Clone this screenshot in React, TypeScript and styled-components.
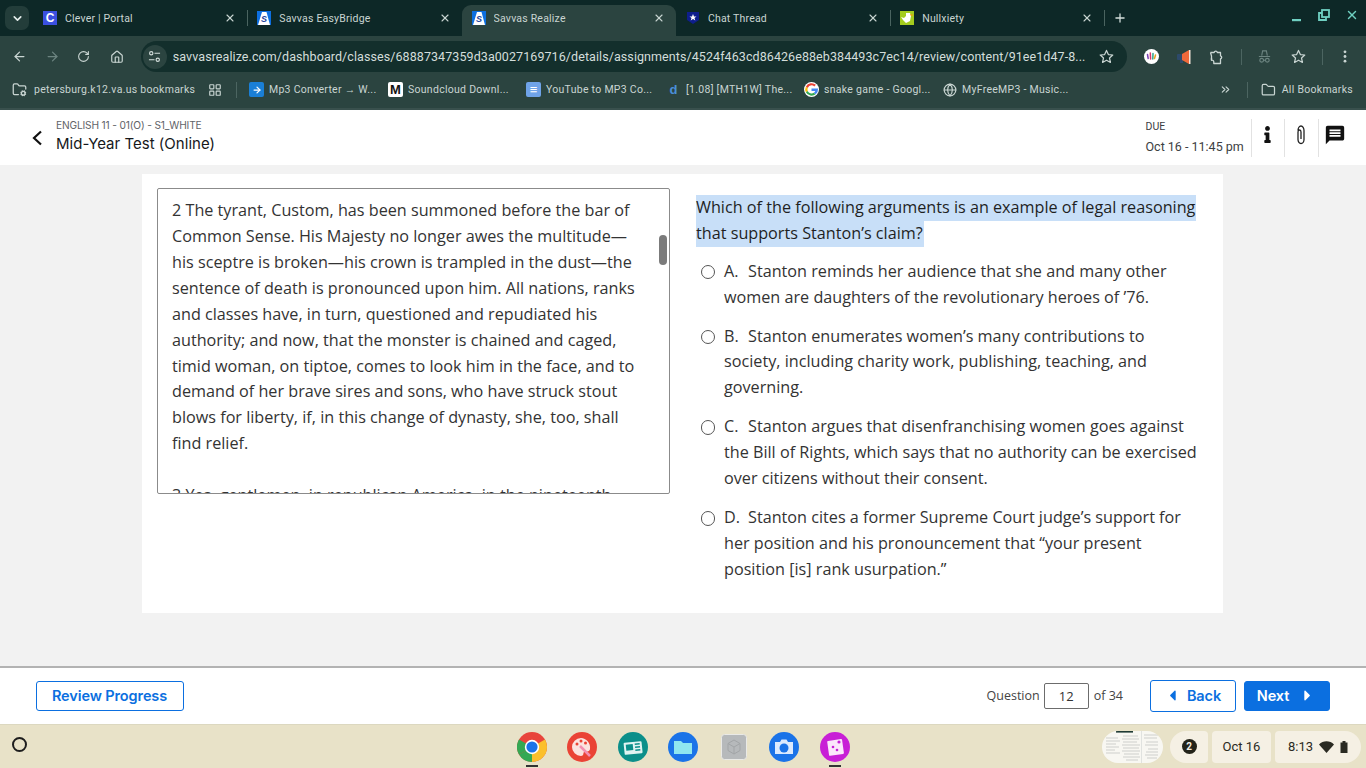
import React from "react";
import styled, { createGlobalStyle } from "styled-components";
import {
  ArrowLeft, ArrowRight, RotateCw, Home, X, Plus,
  ChevronDown, ChevronsRight, Folder, FolderCog, LayoutGrid, Globe,
} from "lucide-react";
import { FaInfo, FaCaretLeft, FaCaretRight } from "react-icons/fa";
import { MdMessage } from "react-icons/md";

const Global = createGlobalStyle`
  html, body { margin: 0; padding: 0; height: 100%; overflow: hidden; background: #f2f2f2; }
  * { box-sizing: border-box; }
`;

const Page = styled.div`
  width: 1366px; height: 768px; display: flex; flex-direction: column; overflow: hidden;
  font-family: "Open Sans", sans-serif;
`;

/* ---- browser chrome ---- */
const TabStrip = styled.div`
  height: 36px; background: #0d2827; display: flex; align-items: stretch; padding-left: 5px;
  color: #c9d5d2; font: 10.5px Roboto, sans-serif; letter-spacing: .2px; position: relative;
`;
const TabMenu = styled.div`
  width: 24px; height: 24px; margin-top: 6px; margin-right: 4px; border-radius: 7px; background: #233d3a;
  display: flex; align-items: center; justify-content: center; color: #e6eeec;
`;
const Tab = styled.div<{ $active?: boolean; $sep?: boolean }>`
  width: 214.3px; display: flex; align-items: center; padding: 0 11px 0 10px; gap: 8px; position: relative;
  background: ${(p) => (p.$active ? "#2b4440" : "transparent")};
  border-radius: ${(p) => (p.$active ? "9px 9px 0 0" : "0")};
  margin-top: ${(p) => (p.$active ? "5px" : "0")};
  padding-bottom: ${(p) => (p.$active ? "5px" : "0")};
  &::after {
    content: ""; display: ${(p) => (p.$sep ? "block" : "none")}; position: absolute; right: -1px; top: 10px;
    width: 1px; height: 16px; background: #4a6460;
  }
`;
const TabTitle = styled.span`flex: 1; white-space: nowrap; overflow: hidden;`;
const Favicon = styled.span<{ $bg: string; $fg?: string }>`
  width: 14px; height: 14px; flex: none; background: ${(p) => p.$bg}; color: ${(p) => p.$fg || "#fff"};
  font: bold 12px/14px "Liberation Sans", sans-serif; letter-spacing: 0; text-align: center; display: inline-block; overflow: hidden;
`;
const NewTab = styled.div`
  margin-left: 1px; width: 30px; display: flex; align-items: center; justify-content: center; color: #d3dedb;
`;
const WindowControls = styled.div`
  margin-left: auto; display: flex; align-items: center; gap: 15px; padding-right: 7px; color: #6fd0c2; padding-bottom: 6px;
`;
const Toolbar = styled.div`
  height: 37px; background: #2b4440; display: flex; align-items: center; padding: 4px 0 0 12px; color: #c9d5d2;
`;
const ToolIcon = styled.span<{ $w?: number; $dim?: boolean }>`
  width: ${(p) => p.$w || 32.7}px; flex: none; display: flex; align-items: center; justify-content: flex-start;
  color: ${(p) => (p.$dim ? "#6c8480" : "#c9d5d2")};
`;
const UrlPill = styled.div`
  width: 986px; height: 31px; margin-left: -2px; border-radius: 16px; background: #132f2c; display: flex; align-items: center;
  padding: 0 13px 0 2px; color: #d3dedb; font: 12.5px Roboto, sans-serif; letter-spacing: .08px; gap: 6px; flex: none;
`;
const SiteChip = styled.span`
  width: 24px; height: 24px; border-radius: 50%; background: #2b4440; display: flex; align-items: center; justify-content: center; flex: none;
`;
const UrlText = styled.span`flex: 1; white-space: nowrap; overflow: hidden;`;
const ToolSep = styled.span`width: 1px; height: 16px; background: #4c6561; flex: none; margin: 0 15px 0 16px;`;
const ExtRight = styled.div`display: flex; align-items: center; margin-left: 17px; gap: 18px;`;
const Bookmarks = styled.div`
  height: 35px; background: #2b4440; display: flex; align-items: center; padding: 0 0 2px 12px; color: #c9d5d2;
  font: 10.5px Roboto, sans-serif; letter-spacing: .28px;
`;
const BookmarkItem = styled.span<{ $w: number; $gap?: number }>`
  display: flex; align-items: center; gap: ${(p) => p.$gap || 5}px; width: ${(p) => p.$w}px; flex: none; white-space: nowrap;
`;
const BmIcon = styled.span<{ $bg?: string; $fg?: string }>`
  width: 15px; height: 15px; flex: none; display: flex; align-items: center; justify-content: center;
  background: ${(p) => p.$bg || "transparent"}; color: ${(p) => p.$fg || "#fff"};
  font: bold 13px/15px "Liberation Sans", sans-serif; letter-spacing: 0; border-radius: 2px;
`;
const BmSep = styled.span<{ $l: number; $r: number }>`
  width: 1px; height: 16px; background: #4c6561; flex: none; margin: 0 ${(p) => p.$r}px 0 ${(p) => p.$l}px;
`;
const ChromeEdge = styled.div`height: 2px; background: #39504d; flex: none;`;

/* ---- app header ---- */
const Header = styled.header`
  height: 55px; flex: none; background: #fff; display: flex; align-items: center; padding: 0 15px 0 31px;
`;
const BackChevron = styled.span`width: 25px; flex: none; color: #111; display: flex; align-items: center;`;
const Titles = styled.div`flex: 1; display: flex; flex-direction: column; gap: 2px; padding-bottom: 4px;`;
const Crumb = styled.div`font: 10.2px/14px Inter, sans-serif; color: #5f6368; letter-spacing: -.16px;`;
const Title = styled.div`font: 400 15px/20px Inter, sans-serif; color: #16181b; letter-spacing: .02px;`;
const Due = styled.div`width: 105px; flex: none; display: flex; flex-direction: column; gap: 7px; color: #3c4043; font-family: Roboto, sans-serif;`;
const DueLabel = styled.div`font-size: 10.5px; line-height: 12px;`;
const DueDate = styled.div`font-size: 12.5px; line-height: 14px; white-space: nowrap;`;
const HeadAction = styled.div`
  width: 33.5px; height: 38px; flex: none; border-left: 1px solid #e2e2e2; display: flex; align-items: center; justify-content: center; color: #111; padding-bottom: 6px;
`;

/* ---- content ---- */
const Main = styled.main`flex: 1; background: #f2f2f2; padding: 9px 143px 0 142px;`;
const Card = styled.section`
  height: 439px; background: #fff; padding: 14px 0 0 15px; display: flex; gap: 26px;
`;
const Passage = styled.div`
  width: 513px; height: 306px; border: 1px solid #8b8b8b; border-radius: 2px; overflow: hidden; position: relative;
  flex: none; padding: 9px 0 0 14px; color: #333; font-size: 16.2px; line-height: 25.92px;
`;
const Para = styled.p`margin: 0 0 26px; width: 475px;`;
const Thumb = styled.span`
  position: absolute; left: 501px; top: 46px; width: 8px; height: 30px; border-radius: 4px; background: #7b7b7b;
`;
const QuestionCol = styled.div`width: 504px; flex: none; padding-top: 6px;`;
const Prompt = styled.p`margin: 0 0 12.7px; font-size: 16.2px; line-height: 26px; color: #1f1f1f;`;
const Selected = styled.span`
  background: #c8dff8; padding: 1.4px 1px 2.5px 0; -webkit-box-decoration-break: clone; box-decoration-break: clone;
`;
const Option = styled.label`
  display: flex; gap: 9px; margin: 0 0 13px; padding-left: 4.5px; font-size: 16.2px; line-height: 25.92px; color: #333; width: 502px;
`;
const Radio = styled.span`
  width: 14.5px; height: 14.5px; margin-top: 6px; border-radius: 50%; border: 1.5px solid #555; flex: none; background: #fff;
`;
const OptionText = styled.span`flex: 1;`;
const OptionLetter = styled.span`display: inline-block; width: 24px;`;

/* ---- footer ---- */
const Footer = styled.footer`
  height: 59px; flex: none; background: #fff; border-top: 2px solid #b3b3b3; display: flex; align-items: center;
  padding: 0 36px 1px; font-size: 12.5px; color: #444; border-bottom: 1px solid #dcd8c0;
`;
const OutlineBtn = styled.button<{ $w: number; $h?: number }>`
  width: ${(p) => p.$w}px; height: ${(p) => p.$h || 30}px; border: 1px solid #0b6fe0; border-radius: 3px; background: #fff; color: #0b6fe0;
  font: 600 14.5px Inter, sans-serif; letter-spacing: -.1px; display: flex; align-items: center; justify-content: center; gap: 6px; padding: 0 1px 0 0;
`;
const FillBtn = styled(OutlineBtn)`background: #0b6fe0; color: #fff; margin-left: 8px; gap: 10px;`;
const Pager = styled.div`margin-left: auto; display: flex; align-items: center; gap: 4px; margin-right: 27px;`;
const PageBox = styled.div`
  width: 45px; height: 26px; border: 1px solid #6c6c6c; border-radius: 2px; display: flex; align-items: center; justify-content: center; color: #333; margin-right: 1px; font-size: 13px;
`;

/* ---- shelf ---- */
const Shelf = styled.div`
  height: 43px; flex: none; background: #e8e2c8; display: grid; grid-template-columns: 1fr auto 1fr; align-items: center; padding: 0 5px;
`;
const Launcher = styled.span`
  width: 15px; height: 15px; border-radius: 50%; border: 2.5px solid #1e1e1e; margin: 0 0 4px 7px; display: block;
`;
const Dock = styled.div`display: flex; gap: 20.5px; align-items: center;`;
const DockIcon = styled.span`
  width: 30px; height: 30px; position: relative; display: block; flex: none;
`;
const RunDot = styled.span`
  position: absolute; left: 9px; top: 33px; width: 12px; height: 2px; background: #333; display: block;
`;
const Tray = styled.div`
  display: flex; justify-content: flex-end; align-items: center; gap: 4px; color: #2a2a22; font: 13px Roboto, sans-serif;
`;
const Thumbnail = styled.span`
  width: 61px; height: 32px; border-radius: 16px; margin-right: 3px; display: block; overflow: hidden; background: #f8f7f2;
`;
const TrayPill = styled.span<{ $w: number; $radius: string }>`
  width: ${(p) => p.$w}px; height: 32px; border-radius: ${(p) => p.$radius}; background: #f5f0e4; display: flex; align-items: center; justify-content: center; gap: 6px;
`;
const Badge = styled.span`
  width: 15px; height: 15px; border-radius: 50%; background: #232319; color: #f5f0e4; font: bold 10px/15px Roboto, sans-serif; text-align: center; display: block;
`;

const ChromeLogo = () => (
  <svg viewBox="0 0 30 30" width="30" height="30">
    <circle cx="15" cy="15" r="15" fill="#e8453c" />
    <path d="M15 15 2 22.5A15 15 0 0 0 15 30z" fill="#34a853" />
    <path d="M2 22.5A15 15 0 0 1 2 7.5L15 15z" fill="#34a853" />
    <path d="M15 15 15 30A15 15 0 0 0 30 15 15 15 0 0 0 28 7.5z" fill="#fbc02d" />
    <circle cx="15" cy="15" r="7.2" fill="#fff" />
    <circle cx="15" cy="15" r="5.6" fill="#1a73e8" />
  </svg>
);
const Paint = () => (
  <svg viewBox="0 0 30 30" width="30" height="30">
    <circle cx="15" cy="15" r="15" fill="#ea4335" />
    <path d="M14 6a9 9 0 1 0 0 18c3 0 2-3 3-4s5 1 6-3c1-6-4-11-9-11z" fill="#fbe3df" />
    <circle cx="10" cy="12" r="1.5" fill="#ea4335" /><circle cx="14" cy="9" r="1.5" fill="#ea4335" /><circle cx="18.500" cy="11" r="1.5" fill="#ea4335" />
    <path d="M13 14l10 10" stroke="#f48fb1" strokeWidth="2.500" />
  </svg>
);
const Slides = () => (
  <svg viewBox="0 0 30 30" width="30" height="30">
    <circle cx="15" cy="15" r="15" fill="#0b8f8a" />
    <rect x="6" y="10" width="18" height="12" rx="1" fill="#dff3f2" transform="rotate(-6 15 15)" />
    <rect x="8" y="12" width="7" height="6" fill="#0b8f8a" transform="rotate(-6 15 15)" />
    <path d="M17 12.500h5M17 15.500h5M17 18.500h5" stroke="#0b8f8a" strokeWidth="1.500" transform="rotate(-6 15 15)" />
  </svg>
);
const Files = () => (
  <svg viewBox="0 0 30 30" width="30" height="30">
    <circle cx="15" cy="15" r="15" fill="#1a73e8" />
    <path d="M6 9h7l2 2h9v11H6z" fill="#8fe6f0" />
  </svg>
);
const Cube = () => (
  <svg viewBox="0 0 26 26" width="26" height="26" style={{ margin: 2 }}>
    <rect x="0.500" y="0.500" width="25" height="25" rx="3" fill="#b6b9bb" stroke="#e9e9e6" />
    <path d="M13 6l6 3.500v7L13 20l-6-3.500v-7zM7 9.500l6 3.500 6-3.500M13 13v7" fill="none" stroke="#a2a5a7" />
  </svg>
);
const Camera = () => (
  <svg viewBox="0 0 30 30" width="30" height="30">
    <circle cx="15" cy="15" r="15" fill="#1a73e8" />
    <path d="M6 10h5l1.500-2.500h5L19 10h5v12H6z" fill="#dbeafe" />
    <circle cx="15" cy="16" r="4.500" fill="#1a73e8" />
  </svg>
);
const Canvas = () => (
  <svg viewBox="0 0 30 30" width="30" height="30">
    <circle cx="15" cy="15" r="15" fill="#c81fd6" />
    <rect x="8" y="8" width="15" height="15" rx="1" fill="#fbe7fb" transform="rotate(-8 15 15)" />
    <circle cx="19" cy="10" r="1.600" fill="#c81fd6" /><circle cx="13" cy="15" r="1.300" fill="#c81fd6" /><circle cx="17" cy="18" r="1.300" fill="#c81fd6" />
  </svg>
);
const Clip = () => (
  <svg viewBox="0 0 10 20" width="10" height="20" fill="none" stroke="#222" strokeWidth="1.300">
    <path d="M2 5.500a3 4.500 0 0 1 6 0v9a3 4 0 0 1-6 0V7a1.500 2 0 0 1 3 0v7" />
  </svg>
);
const Tune = () => (
  <svg viewBox="0 0 14 14" width="13" height="13" fill="none" stroke="#d3dedb" strokeWidth="1.200">
    <circle cx="3.500" cy="3.500" r="1.800" /><path d="M7 3.500h6M1 10.500h6" /><circle cx="10.500" cy="10.500" r="1.800" />
  </svg>
);
const Avatar = () => (
  <svg viewBox="0 0 15 15" width="15" height="15" fill="none" strokeWidth="1.500" strokeLinecap="round">
    <circle cx="7.500" cy="7.500" r="7.500" fill="#fff" />
    <path d="M3.500 5.500l.7 4" stroke="#7b3fb5" />
    <path d="M6.300 4l.3 6" stroke="#d8366b" />
    <path d="M9 4.500l-.2 5.500" stroke="#2ca58d" />
    <path d="M11.500 6l-1 3.500" stroke="#e8a020" />
  </svg>
);
const Speaker = () => (
  <svg viewBox="0 0 14 16" width="14" height="16">
    <rect x="0" y="5" width="5" height="6" rx="1" fill="#2d4a6b" />
    <rect x="3" y="10" width="3" height="4" fill="#2d4a6b" />
    <path d="M5 5l7-4v14l-7-4z" fill="#f0693a" />
    <rect x="12" y="1" width="1.500" height="14" fill="#f3e3d8" />
  </svg>
);
const PuzzleIcon = () => (
  <svg viewBox="0 0 16 16" width="16" height="16" fill="none" stroke="#c9d5d2" strokeWidth="1.300" strokeLinejoin="round">
    <path d="M1.500 3.500h3.600a1.700 1.700 0 0 1 3.300 0h3.100v3.300a1.600 1.600 0 0 1 0 3.100v4.600H4.800V13a1.700 1.700 0 0 0-2.300-1.700V9" />
    <path d="M1.500 3.500 2.500 7v4.300" />
  </svg>
);
const Spy = () => (
  <svg viewBox="0 0 16 16" width="15" height="15" fill="none" stroke="#6c8480" strokeWidth="1.200">
    <path d="M5 7l1-5h4l1 5M2 8h12" /><circle cx="5" cy="12" r="2" /><circle cx="11" cy="12" r="2" /><path d="M7 12h2" />
  </svg>
);
const StarOutline = () => (
  <svg viewBox="0 0 16 16" width="15" height="15" fill="none" stroke="#c9d5d2" strokeWidth="1.300" strokeLinejoin="round">
    <path d="M8 1.500l2 4.400 4.700.5-3.500 3.200 1 4.700L8 11.900l-4.200 2.400 1-4.700L1.300 6.400 6 5.900z" />
  </svg>
);
const GoogleG = () => (
  <svg viewBox="0 0 16 16" width="15" height="15">
    <circle cx="8" cy="8" r="8" fill="#fff" />
    <path d="M8 3.500a4.500 4.500 0 0 1 3 1.200l1.700-1.700A7 7 0 0 0 2 5l2 1.500A4.500 4.500 0 0 1 8 3.500z" fill="#ea4335" />
    <path d="M2 5a7 7 0 0 0 0 6l2-1.500a4.500 4.500 0 0 1 0-3z" fill="#fbbc05" />
    <path d="M2 11a7 7 0 0 0 10.500 2l-2-1.500A4.500 4.500 0 0 1 4 9.500z" fill="#34a853" />
    <path d="M15 7H8v2.500h4a3.400 3.400 0 0 1-1.500 2l2 1.500A7 7 0 0 0 15 7z" fill="#4285f4" />
  </svg>
);
const Duck = () => (
  <svg viewBox="0 0 14 14" width="14" height="14">
    <rect width="14" height="14" fill="#a4cc1e" />
    <path d="M1 6l3 1 2-2V2h4l1 3-1 5-4 2-3-3z" fill="#fff" /><path d="M10 3l4 1-3 1z" fill="#f59e0b" />
  </svg>
);
const ShieldStar = () => (
  <svg viewBox="0 0 14 14" width="14" height="14">
    <path d="M1 1h12v8l-6 4-6-4z" fill="#0e1e8c" />
    <path d="M7 3l1 2.500h2.500L8.500 7l.8 2.500L7 8l-2.300 1.500L5.500 7l-2-1.500H6z" fill="#fff" />
  </svg>
);
const SavvasMark = () => (
  <svg viewBox="0 0 14 14" width="14" height="14" style={{ flex: "none" }}>
    <rect width="14" height="14" fill="#0d6fe0" />
    <path d="M5 1h4.500L13 14H1z" fill="#fff" />
    <text x="7" y="11" textAnchor="middle" fontFamily="Liberation Sans" fontWeight="700" fontStyle="italic" fontSize="9" fill="#1a3f9a">S</text>
  </svg>
);
const WindowMin = () => (
  <svg viewBox="0 0 12 12" width="12" height="12" style={{ marginTop: 8 }}><rect x="1" y="6" width="9" height="2.200" fill="currentColor" /></svg>
);
const WindowRestore = () => (
  <svg viewBox="0 0 12 12" width="12" height="12" fill="none" stroke="currentColor" strokeWidth="1.800"><rect x="4" y="1" width="7" height="7" /><path d="M4 4H1v7h7V8" /></svg>
);
const WifiWedge = () => (
  <svg viewBox="0 0 15 12" width="15" height="12"><path d="M0 3.500C4-.8 11-.8 15 3.500L7.500 12z" fill="#2a2a22" /></svg>
);
const DocThumb = () => (
  <svg viewBox="0 0 61 32" width="61" height="32" fill="none" stroke="#b4b6b2" strokeWidth=".6">
    <rect x="14" y="0" width="17" height="1.600" fill="#1f3a34" stroke="none" />
    <path d="M4 7h12M4 10h14M4 13h10M4 16h13M4 19h9M4 22h14" />
    <path d="M21 5h15M20 8h17M21 11h14M20 14h18M21 17h16M20 20h18M22 23h15M21 26h17M24 29h12" />
    <path d="M42 4h14M42 7h13M44 11h12M43 14h13M46 18h10M44 21h12M43 24h13M45 27h10" />
    <rect x="39" y="0" width="1" height="32" fill="#e0e2df" stroke="none" />
  </svg>
);

const PASSAGE_A = "2 The tyrant, Custom, has been summoned before the bar of Common Sense. His Majesty no longer awes the multitude—his sceptre is broken—his crown is trampled in the dust—the sentence of death is pronounced upon him. All nations, ranks and classes have, in turn, questioned and repudiated his authority; and now, that the monster is chained and caged, timid woman, on tiptoe, comes to look him in the face, and to demand of her brave sires and sons, who have struck stout blows for liberty, if, in this change of dynasty, she, too, shall find relief.";
const PASSAGE_B = "3 Yes, gentlemen, in republican America, in the nineteenth century, we, the daughters of your revolutionary sires.";

const OPTIONS = [
  ["A.", "Stanton reminds her audience that she and many other women are daughters of the revolutionary heroes of ’76."],
  ["B.", "Stanton enumerates women’s many contributions to society, including charity work, publishing, teaching, and governing."],
  ["C.", "Stanton argues that disenfranchising women goes against the Bill of Rights, which says that no authority can be exercised over citizens without their consent."],
  ["D.", "Stanton cites a former Supreme Court judge’s support for her position and his pronouncement that “your present position [is] rank usurpation.”"],
];

export default function App() {
  return (
    <Page>
      <Global />
      <TabStrip>
        <TabMenu><ChevronDown size={13} strokeWidth={3} /></TabMenu>
        <Tab $sep>
          <Favicon $bg="#3b50e0">C</Favicon><TabTitle>Clever | Portal</TabTitle><X size={12} strokeWidth={2.2} />
        </Tab>
        <Tab>
          <SavvasMark /><TabTitle>Savvas EasyBridge</TabTitle><X size={12} strokeWidth={2.2} />
        </Tab>
        <Tab $active>
          <SavvasMark /><TabTitle>Savvas Realize</TabTitle><X size={12} strokeWidth={2.2} />
        </Tab>
        <Tab $sep>
          <ShieldStar /><TabTitle>Chat Thread</TabTitle><X size={12} strokeWidth={2.2} />
        </Tab>
        <Tab $sep>
          <Duck /><TabTitle>Nullxiety</TabTitle><X size={12} strokeWidth={2.2} />
        </Tab>
        <NewTab><Plus size={14} strokeWidth={2.2} /></NewTab>
        <WindowControls>
          <WindowMin />
          <WindowRestore />
          <X size={14} strokeWidth={2.5} />
        </WindowControls>
      </TabStrip>

      <Toolbar>
        <ToolIcon><ArrowLeft size={15} /></ToolIcon>
        <ToolIcon $dim><ArrowRight size={15} /></ToolIcon>
        <ToolIcon><RotateCw size={13} /></ToolIcon>
        <ToolIcon><Home size={14} /></ToolIcon>
        <UrlPill>
          <SiteChip><Tune /></SiteChip>
          <UrlText>savvasrealize.com/dashboard/classes/68887347359d3a0027169716/details/assignments/4524f463cd86426e88eb384493c7ec14/review/content/91ee1d47-8...</UrlText>
          <StarOutline />
        </UrlPill>
        <ExtRight>
          <Avatar />
          <Speaker />
          <PuzzleIcon />
        </ExtRight>
        <ToolSep />
        <Spy />
        <ToolIcon $w={15} style={{ marginLeft: 19 }}><StarOutline /></ToolIcon>
        <ToolSep />
        <svg viewBox="0 0 4 16" width="4" height="15" fill="#c9d5d2" style={{ marginLeft: 5 }}><circle cx="2" cy="3" r="1.500" /><circle cx="2" cy="8" r="1.500" /><circle cx="2" cy="13" r="1.500" /></svg>
      </Toolbar>

      <Bookmarks>
        <BookmarkItem $w={196} $gap={7}><FolderCog size={15} />petersburg.k12.va.us bookmarks</BookmarkItem>
        <LayoutGrid size={14} />
        <BmSep $l={14} $r={12} />
        <BookmarkItem $w={139}><BmIcon $bg="#1a7fd6"><ArrowRight size={10} strokeWidth={3} /></BmIcon>Mp3 Converter → W...</BookmarkItem>
        <BookmarkItem $w={138}><BmIcon $bg="#fff" $fg="#111">M</BmIcon>Soundcloud Downl...</BookmarkItem>
        <BookmarkItem $w={140}><BmIcon $bg="#6fa3e8">≡</BmIcon>YouTube to MP3 Co...</BookmarkItem>
        <BookmarkItem $w={138}><BmIcon $fg="#4a8fd8">d</BmIcon>[1.08] [MTH1W] The...</BookmarkItem>
        <BookmarkItem $w={139}><GoogleG />snake game - Googl...</BookmarkItem>
        <BookmarkItem $w={276}><Globe size={14} />MyFreeMP3 - Music...</BookmarkItem>
        <ChevronsRight size={13} />
        <BmSep $l={15} $r={13} />
        <BookmarkItem $w={92} $gap={6}><Folder size={16} />All Bookmarks</BookmarkItem>
      </Bookmarks>
      <ChromeEdge />

      <Header>
        <BackChevron>
          <svg viewBox="0 0 12 16" width="12" height="16" fill="none" stroke="#111" strokeWidth="2.200"><path d="M10 1.500 3 8l7 6.500" /></svg>
        </BackChevron>
        <Titles>
          <Crumb>ENGLISH 11 - 01(O) - S1_WHITE</Crumb>
          <Title>Mid-Year Test (Online)</Title>
        </Titles>
        <Due>
          <DueLabel>DUE</DueLabel>
          <DueDate>Oct 16 - 11:45 pm</DueDate>
        </Due>
        <HeadAction><FaInfo size={17} /></HeadAction>
        <HeadAction><Clip /></HeadAction>
        <HeadAction><MdMessage size={22} /></HeadAction>
      </Header>

      <Main>
        <Card>
          <Passage>
            <Para>{PASSAGE_A}</Para>
            <Para>{PASSAGE_B}</Para>
            <Thumb />
          </Passage>
          <QuestionCol>
            <Prompt><Selected>Which of the following arguments is an example of legal reasoning that supports Stanton’s claim?</Selected></Prompt>
            {OPTIONS.map(([letter, text]) => (
              <Option key={letter}>
                <Radio />
                <OptionText><OptionLetter>{letter}</OptionLetter>{text}</OptionText>
              </Option>
            ))}
          </QuestionCol>
        </Card>
      </Main>

      <Footer>
        <OutlineBtn $w={148}>Review Progress</OutlineBtn>
        <Pager>
          <span>Question</span>
          <PageBox>12</PageBox>
          <span>of 34</span>
        </Pager>
        <OutlineBtn $w={86} $h={32}><FaCaretLeft size={17} />Back</OutlineBtn>
        <FillBtn $w={86}>Next<FaCaretRight size={17} /></FillBtn>
      </Footer>

      <Shelf>
        <Launcher />
        <Dock>
          <DockIcon><ChromeLogo /><RunDot /></DockIcon>
          <DockIcon><Paint /></DockIcon>
          <DockIcon><Slides /></DockIcon>
          <DockIcon><Files /></DockIcon>
          <DockIcon><Cube /></DockIcon>
          <DockIcon><Camera /></DockIcon>
          <DockIcon><Canvas /><RunDot /></DockIcon>
        </Dock>
        <Tray>
          <Thumbnail><DocThumb /></Thumbnail>
          <TrayPill $w={38} $radius="16px 4px 4px 16px"><Badge>2</Badge></TrayPill>
          <TrayPill $w={59} $radius="4px">Oct 16</TrayPill>
          <TrayPill $w={86} $radius="4px 16px 16px 4px">8:13<WifiWedge /><svg viewBox="0 0 8 12" width="8" height="12"><path d="M2.500 0h3v1.500H7.500V12H.5V1.500h2z" fill="#2a2a22" /></svg></TrayPill>
        </Tray>
      </Shelf>
    </Page>
  );
}
